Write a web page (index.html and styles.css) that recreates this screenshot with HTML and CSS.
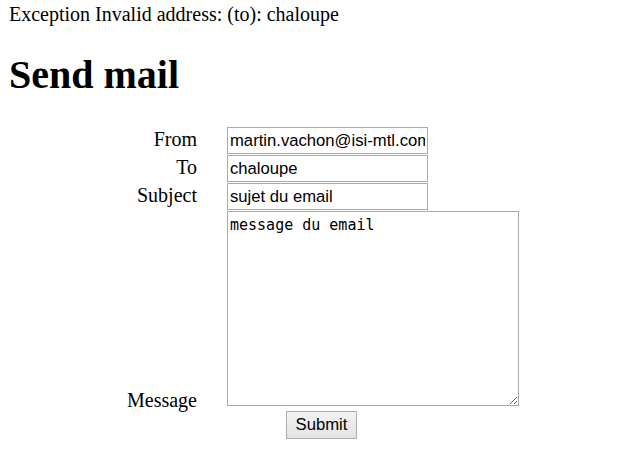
FILE: index.html
```html
<!DOCTYPE html>
<html>
<head>
<meta charset="utf-8">
<title>Send mail</title>
<link rel="stylesheet" href="styles.css">
</head>
<body>
<div class="exception">Exception Invalid address: (to): chaloupe</div>
<h1 class="title">Send mail</h1>
<form class="mail-form">
  <label class="label">From</label>
  <input class="field" type="text" value="martin.vachon@isi-mtl.com">
  <label class="label">To</label>
  <input class="field" type="text" value="chaloupe">
  <label class="label">Subject</label>
  <input class="field" type="text" value="sujet du email">
  <label class="label label-message">Message</label>
  <textarea class="message">message du email</textarea>
  <div class="actions"><button class="submit" type="button">Submit</button></div>
</form>
</body>
</html>
```

FILE: styles.css
```css
html, body {
  margin: 0;
  background: #ffffff;
}
body {
  padding: 3px 10px 3px 9px;
  font-family: "Liberation Serif", "Times New Roman", serif;
  font-size: 20px;
  color: #000;
}
.exception {
  line-height: 23px;
}
.title {
  font-size: 40px;
  font-weight: bold;
  margin: 26px 0 29px;
  line-height: 46px;
}
.mail-form {
  display: grid;
  grid-template-columns: 71px 292px;
  column-gap: 30px;
  row-gap: 1px;
  margin-left: 117px;
  align-items: baseline;
}
.label {
  text-align: right;
  white-space: nowrap;
  line-height: 23px;
}
.field {
  box-sizing: border-box;
  width: 201px;
  height: 27px;
  margin: 0;
  padding: 1px 2px;
  border: 1px solid #a9a9a9;
  font-family: "Liberation Sans", Arial, sans-serif;
  font-size: 16.67px;
  color: #000;
  background: #fff;
}
.label-message {
  align-self: end;
  margin-bottom: -6px;
}
.message {
  box-sizing: border-box;
  width: 292px;
  height: 195px;
  margin: 0;
  padding: 4px 2px 2px;
  border: 1px solid #a9a9a9;
  font-family: "DejaVu Sans Mono", "Liberation Mono", monospace;
  font-size: 15px;
  line-height: 18px;
  color: #000;
  background: #fff;
  align-self: start;
}
.actions {
  grid-column: 1 / 3;
  display: flex;
  justify-content: center;
  margin-top: 4px;
  padding-right: 2px;
}
.submit {
  box-sizing: border-box;
  width: 71px;
  height: 28px;
  margin: 0;
  padding: 0 6px;
  border: 1px solid #adadad;
  border-radius: 0;
  background: linear-gradient(#f2f2f2, #e3e3e3);
  font-family: "Liberation Sans", Arial, sans-serif;
  font-size: 16.67px;
  color: #000;
}
```
